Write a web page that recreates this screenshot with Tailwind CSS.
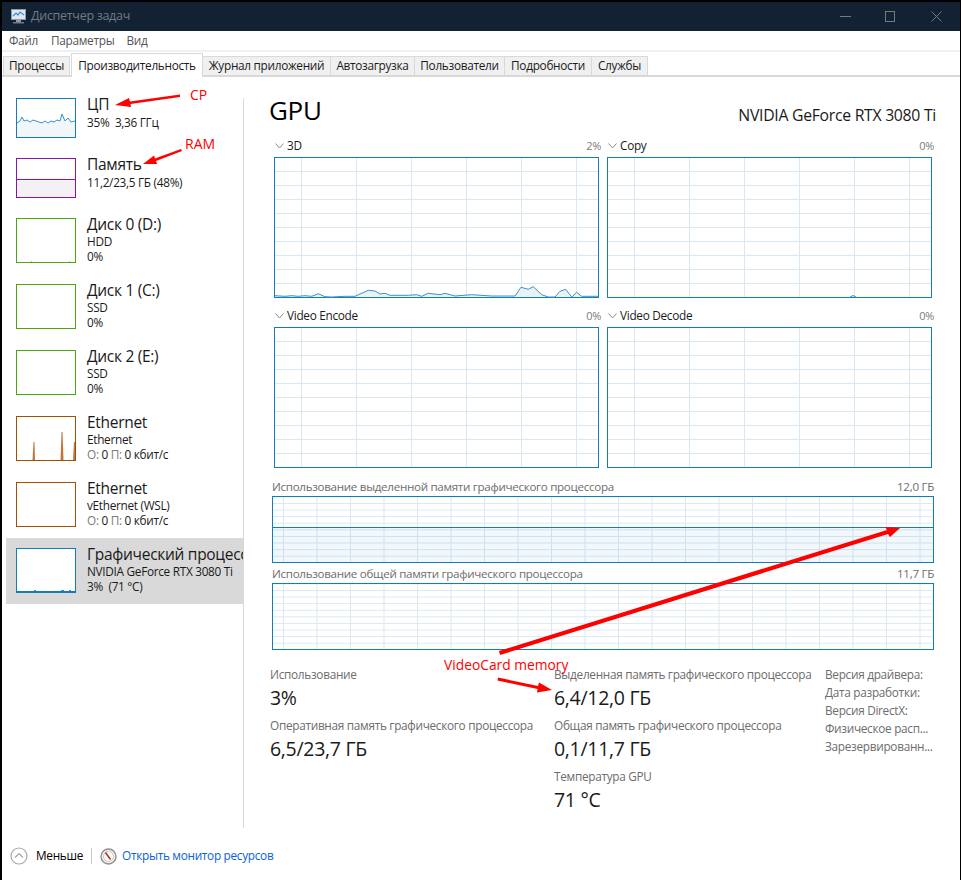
<!DOCTYPE html>
<html lang="ru">
<head>
<meta charset="utf-8">
<title>Диспетчер задач</title>
<script src="https://cdn.jsdelivr.net/npm/@tailwindcss/browser@4"></script>
</head>
<body class="bg-black">
<div class="relative w-[961px] h-[880px] bg-black pl-[2px] pr-px pt-[2px] font-['Open_Sans',sans-serif] text-[11.8px] text-[#1a1a1a] overflow-hidden tracking-[-0.025em] flex flex-col">

  <!-- title bar -->
  <div class="h-[29px] bg-[#122233] flex items-center text-[#6f7b85] shrink-0">
    <svg class="ml-[8px] w-[17px] h-[15px]" viewBox="0 0 17 15"><rect x="1.5" y="0.5" width="14" height="10" fill="#dfe7ee" stroke="#8e9aa5"/><polyline points="3,7 6,4 8,6 10,3 14,6" fill="none" stroke="#3d8ad0" stroke-width="1.2"/><rect x="6" y="11" width="5" height="2" fill="#8e9aa5"/><rect x="3" y="13" width="11" height="1.5" fill="#6f7b85"/></svg>
    <span class="ml-[4px] text-[12.5px]">Диспетчер задач</span>
    <div class="ml-auto flex items-center">
      <svg class="w-[11px] h-[11px]" viewBox="0 0 11 11"><line x1="0" y1="5.5" x2="11" y2="5.5" stroke="#6f7b85"/></svg>
      <svg class="ml-[34px] w-[10px] h-[11px]" viewBox="0 0 10 11"><rect x="0.5" y="0.5" width="9" height="10" fill="none" stroke="#6f7b85"/></svg>
      <svg class="ml-[36px] mr-[18px] w-[11px] h-[11px]" viewBox="0 0 11 11"><path d="M0.5 0.5L10.5 10.5M10.5 0.5L0.5 10.5" stroke="#6f7b85"/></svg>
    </div>
  </div>

  <div class="flex-1 bg-white flex flex-col min-h-0">
    <!-- menu -->
    <div class="h-[18px] flex items-center text-[#555] shrink-0 border-b-[2px] border-[#f0f0f0] box-content pt-px -mb-px">
      <span class="ml-[7px]">Файл</span><span class="ml-[13px]">Параметры</span><span class="ml-[12px]">Вид</span>
    </div>
    <!-- tabs -->
    <div class="h-[23px] mt-[1px] flex items-end border-b-[2px] border-[#d9d9d9] box-content pl-[1px] shrink-0 relative">
      <div class="w-[67px] h-[20px] mb-[-1px] bg-[#f0f0f0] border border-[#d9d9d9] flex items-center justify-center">Процессы</div>
      <div class="w-[132px] h-[24px] mb-[-2px] bg-white border border-b-0 border-[#d9d9d9] flex items-center justify-center relative z-10 ml-[1px]">Производительность</div>
      <div class="w-[129px] h-[20px] mb-[-1px] bg-[#f0f0f0] border border-[#d9d9d9] -ml-[1px] flex items-center justify-center">Журнал приложений</div>
      <div class="w-[85px] h-[20px] mb-[-1px] bg-[#f0f0f0] border border-[#d9d9d9] -ml-[1px] flex items-center justify-center">Автозагрузка</div>
      <div class="w-[91px] h-[20px] mb-[-1px] bg-[#f0f0f0] border border-[#d9d9d9] -ml-[1px] flex items-center justify-center">Пользователи</div>
      <div class="w-[88px] h-[20px] mb-[-1px] bg-[#f0f0f0] border border-[#d9d9d9] -ml-[1px] flex items-center justify-center">Подробности</div>
      <div class="w-[57px] h-[20px] mb-[-1px] bg-[#f0f0f0] border border-[#d9d9d9] -ml-[1px] flex items-center justify-center">Службы</div>
    </div>

    <!-- body -->
    <div class="flex mt-[11px] h-[741px] shrink-0">
      <!-- sidebar -->
      <div class="w-[241px] shrink-0 flex flex-col pl-[4px]">
        <div class="h-[60px] flex pl-[10px] pt-[7px]">
          <div class="relative w-[60px] h-[40px] mt-[3px] border border-[#117dbb] shrink-0">
            <svg class="absolute inset-0 w-full h-full" viewBox="0 0 58 38" preserveAspectRatio="none"><path d="M0 24L3 22L5 18L7 22L10 21L13 23L16 21L19 22L22 23L25 24L28 22L31 24L34 22L37 23L40 21L43 22L45 15L48 22L51 19L54 23L58 22L58 38L0 38Z" fill="#f1f6fa"/><polyline points="0,24 3,22 5,18 7,22 10,21 13,23 16,21 19,22 22,23 25,24 28,22 31,24 34,22 37,23 40,21 43,22 45,15 48,22 51,19 54,23 58,22" fill="none" stroke="#3a92c8" stroke-width="1"/></svg>
          </div>
          <div class="ml-[11px] leading-[16px]"><div class="text-[15.5px] leading-[19px] h-[19px]">ЦП</div><div>35%&nbsp; 3,36 ГГц</div></div>
        </div>
        <div class="h-[60px] flex pl-[10px] pt-[7px]">
          <div class="w-[60px] h-[40px] mt-[3px] border border-[#8b12ae] shrink-0 flex flex-col"><div class="h-[21px] border-b border-[#8b12ae]"></div><div class="flex-1 bg-[#f3f1f4]"></div></div>
          <div class="ml-[11px] leading-[16px]"><div class="text-[15.5px] leading-[19px] h-[19px]">Память</div><div>11,2/23,5 ГБ (48%)</div></div>
        </div>
        <div class="h-[66px] flex pl-[10px] pt-[7px]">
          <div class="relative w-[60px] h-[45px] mt-[3px] border border-[#4da60c] shrink-0"><div class="absolute bottom-0 left-[14px] w-px h-px bg-[#9ccf7a]"></div><div class="absolute bottom-0 left-[52px] w-px h-px bg-[#9ccf7a]"></div></div>
          <div class="ml-[11px] leading-[15px]"><div class="text-[15.5px] leading-[19px] h-[19px]">Диск 0 (D:)</div><div>HDD</div><div>0%</div></div>
        </div>
        <div class="h-[66px] flex pl-[10px] pt-[7px]">
          <div class="w-[60px] h-[45px] mt-[3px] border border-[#4da60c] shrink-0"></div>
          <div class="ml-[11px] leading-[15px]"><div class="text-[15.5px] leading-[19px] h-[19px]">Диск 1 (C:)</div><div>SSD</div><div>0%</div></div>
        </div>
        <div class="h-[66px] flex pl-[10px] pt-[7px]">
          <div class="w-[60px] h-[45px] mt-[3px] border border-[#4da60c] shrink-0"></div>
          <div class="ml-[11px] leading-[15px]"><div class="text-[15.5px] leading-[19px] h-[19px]">Диск 2 (E:)</div><div>SSD</div><div>0%</div></div>
        </div>
        <div class="h-[66px] flex pl-[10px] pt-[7px]">
          <div class="relative w-[60px] h-[45px] mt-[3px] border border-[#a74f01] shrink-0">
            <svg class="absolute inset-0 w-full h-full" viewBox="0 0 58 43"><path d="M15.5 43L16.5 25L17.5 25L18 43Z" fill="#c4763a"/><path d="M43.5 43L44.5 15L45.5 15L46.5 43Z" fill="#c4763a"/><path d="M56 43L57 25L58 25L58 43Z" fill="#c4763a"/></svg>
          </div>
          <div class="ml-[11px] leading-[15px]"><div class="text-[15.5px] leading-[19px] h-[19px]">Ethernet</div><div>Ethernet</div><div><span class="text-[#7a7a7a]">О:</span> 0 <span class="text-[#7a7a7a]">П:</span> 0 кбит/с</div></div>
        </div>
        <div class="h-[66px] flex pl-[10px] pt-[7px]">
          <div class="w-[60px] h-[45px] mt-[3px] border border-[#a74f01] shrink-0"></div>
          <div class="ml-[11px] leading-[15px]"><div class="text-[15.5px] leading-[19px] h-[19px]">Ethernet</div><div>vEthernet (WSL)</div><div><span class="text-[#7a7a7a]">О:</span> 0 <span class="text-[#7a7a7a]">П:</span> 0 кбит/с</div></div>
        </div>
        <div class="h-[66px] flex pl-[10px] pt-[7px] bg-[#d9d9d9] overflow-hidden">
          <div class="relative w-[60px] h-[45px] mt-[3px] border border-[#117dbb] bg-white shrink-0"><div class="absolute bottom-0 inset-x-0 h-[1px] bg-[#117dbb]"></div><div class="absolute bottom-[1px] left-[17px] w-[2px] h-px bg-[#3a92c8]"></div><div class="absolute bottom-[1px] left-[44px] w-[3px] h-[1px] bg-[#3a92c8]"></div><div class="absolute bottom-[1px] left-[52px] w-[2px] h-px bg-[#3a92c8]"></div></div>
          <div class="ml-[11px] leading-[15px] whitespace-nowrap"><div class="text-[15.5px] leading-[19px] h-[19px]">Графический процессор</div><div>NVIDIA GeForce RTX 3080 Ti</div><div>3%&nbsp; (71 °C)</div></div>
        </div>
      </div>

      <!-- main -->
      <div class="flex-1 border-l-[1px] border-[#d9d9d9] pl-[28px] pr-[25px] h-[730px] mt-[10px]">
        <div class="flex items-end justify-between h-[27px] -ml-[3px] mt-[2px]">
          <span class="text-[26px] leading-[34px] text-black">GPU</span>
          <span class="text-[15.8px] leading-[20px] mb-[2px] -mr-[1px]">NVIDIA GeForce RTX 3080 Ti</span>
        </div>
        <div class="w-[662px] px-[2px] pt-[8px] grid grid-cols-[325px_325px] gap-x-[8px]">
          <div>
            <div class="h-[22px] flex items-center text-[#666]"><svg class="w-[9px] h-[6px] ml-[1px]" viewBox="0 0 9 6"><path d="M0.5 0.5L4.5 5L8.5 0.5" fill="none" stroke="#8a8a8a"/></svg><span class="ml-[3px] text-[#1a1a1a]">3D</span><span class="ml-auto -mr-[2px] text-[11px] text-[#7a7a7a]">2%</span></div>
            <div class="relative h-[141px] border border-[#117dbb] bg-[linear-gradient(#d9e8f3_1px,transparent_1px),linear-gradient(90deg,#d9e8f3_1px,transparent_1px)] bg-[size:55px_14px] bg-[position:26px_13px]">
              <svg class="absolute -inset-px w-[325px] h-[141px]" viewBox="0 0 325 141"><path d="M1 138.7L11 139.3L17.7 138.7L24.3 139.3L31 138.7L37.7 139.3L44.3 136.7L51 139.7L57.7 140L71 139.3L81 139.3L94.3 133.3L101 134L106 137L111 136.3L116 138.3L134.3 138.3L142.7 137.7L147.7 139.3L154.3 136.3L166 137.7L171 136.3L181 139L197.7 137.7L217.7 139L241 139L247 130.3L254.3 132.3L259.3 129.7L267.7 137.7L274.3 140L281 140L286 134.3L291.7 132.3L297.7 140L302.7 135.3L307.7 139.3L324 139.3L324 140L1 140Z" fill="#e9f2f8"/><polyline points="1,138.7 11,139.3 17.7,138.7 24.3,139.3 31,138.7 37.7,139.3 44.3,136.7 51,139.7 57.7,140 71,139.3 81,139.3 94.3,133.3 101,134 106,137 111,136.3 116,138.3 134.3,138.3 142.7,137.7 147.7,139.3 154.3,136.3 166,137.7 171,136.3 181,139 197.7,137.7 217.7,139 241,139 247,130.3 254.3,132.3 259.3,129.7 267.7,137.7 274.3,140 281,140 286,134.3 291.7,132.3 297.7,140 302.7,135.3 307.7,139.3 324,139.3" fill="none" stroke="#3a92c8" stroke-width="1"/></svg>
            </div>
          </div>
          <div>
            <div class="h-[22px] flex items-center text-[#666]"><svg class="w-[9px] h-[6px] ml-[1px]" viewBox="0 0 9 6"><path d="M0.5 0.5L4.5 5L8.5 0.5" fill="none" stroke="#8a8a8a"/></svg><span class="ml-[3px] text-[#1a1a1a]">Copy</span><span class="ml-auto -mr-[2px] text-[11px] text-[#7a7a7a]">0%</span></div>
            <div class="relative h-[141px] border border-[#117dbb] bg-[linear-gradient(#d9e8f3_1px,transparent_1px),linear-gradient(90deg,#d9e8f3_1px,transparent_1px)] bg-[size:55px_14px] bg-[position:26px_13px]">
              <svg class="absolute -inset-px w-[325px] h-[141px]" viewBox="0 0 325 141"><polyline points="243,140 246,138.5 249,140" fill="#e9f2f8" stroke="#3a92c8"/></svg>
            </div>
          </div>
          <div class="mt-[7px]">
            <div class="h-[22px] flex items-center text-[#666]"><svg class="w-[9px] h-[6px] ml-[1px]" viewBox="0 0 9 6"><path d="M0.5 0.5L4.5 5L8.5 0.5" fill="none" stroke="#8a8a8a"/></svg><span class="ml-[3px] text-[#1a1a1a]">Video Encode</span><span class="ml-auto -mr-[2px] text-[11px] text-[#7a7a7a]">0%</span></div>
            <div class="h-[141px] border border-[#117dbb] bg-[linear-gradient(#d9e8f3_1px,transparent_1px),linear-gradient(90deg,#d9e8f3_1px,transparent_1px)] bg-[size:55px_14px] bg-[position:26px_13px]"></div>
          </div>
          <div class="mt-[7px]">
            <div class="h-[22px] flex items-center text-[#666]"><svg class="w-[9px] h-[6px] ml-[1px]" viewBox="0 0 9 6"><path d="M0.5 0.5L4.5 5L8.5 0.5" fill="none" stroke="#8a8a8a"/></svg><span class="ml-[3px] text-[#1a1a1a]">Video Decode</span><span class="ml-auto -mr-[2px] text-[11px] text-[#7a7a7a]">0%</span></div>
            <div class="h-[141px] border border-[#117dbb] bg-[linear-gradient(#d9e8f3_1px,transparent_1px),linear-gradient(90deg,#d9e8f3_1px,transparent_1px)] bg-[size:55px_14px] bg-[position:26px_13px]"></div>
          </div>
        </div>

        <div class="w-[662px] mt-[9px]">
          <div class="h-[19px] pt-[1px] flex items-center justify-between text-[11.6px] text-[#6d6d6d]"><span>Использование выделенной памяти графического процессора</span><span>12,0 ГБ</span></div>
          <div class="relative h-[67px] border border-[#117dbb] bg-[linear-gradient(#d9e8f3_1px,transparent_1px),linear-gradient(90deg,#d9e8f3_1px,transparent_1px)] bg-[size:33.5px_6.6px] bg-[position:10px_6px]">
            <div class="absolute inset-x-0 bottom-0 h-[35px] border-t border-[#117dbb] bg-[#117dbb]/6"></div>
          </div>
          <div class="h-[20px] pt-[2px] flex items-center justify-between text-[11.6px] text-[#6d6d6d]"><span>Использование общей памяти графического процессора</span><span>11,7 ГБ</span></div>
          <div class="h-[67px] border border-[#117dbb] bg-[linear-gradient(#d9e8f3_1px,transparent_1px),linear-gradient(90deg,#d9e8f3_1px,transparent_1px)] bg-[size:33.5px_6.6px] bg-[position:10px_6px]"></div>
        </div>

        <div class="-ml-[2px] mt-[16px] grid grid-cols-[284px_271px_1fr] whitespace-nowrap">
          <div class="text-[#6d6d6d]">
            <div class="leading-[16px] mb-[2px]">Использование</div>
            <div class="text-[19.5px] leading-[28px] text-[#1a1a1a] mb-[5px]">3%</div>
            <div class="leading-[16px] mb-[2px]">Оперативная память графического процессора</div>
            <div class="text-[19.5px] leading-[28px] text-[#1a1a1a]">6,5/23,7 ГБ</div>
          </div>
          <div class="text-[#6d6d6d]">
            <div class="leading-[16px] mb-[2px]">Выделенная память графического процессора</div>
            <div class="text-[19.5px] leading-[28px] text-[#1a1a1a] mb-[5px]">6,4/12,0 ГБ</div>
            <div class="leading-[16px] mb-[2px]">Общая память графического процессора</div>
            <div class="text-[19.5px] leading-[28px] text-[#1a1a1a] mb-[5px]">0,1/11,7 ГБ</div>
            <div class="leading-[16px] mb-[2px]">Температура GPU</div>
            <div class="text-[19.5px] leading-[28px] text-[#1a1a1a]">71 °C</div>
          </div>
          <div class="text-[#6d6d6d] leading-[18px] -mt-px">
            <div>Версия драйвера:</div>
            <div>Дата разработки:</div>
            <div>Версия DirectX:</div>
            <div>Физическое расп...</div>
            <div>Зарезервированн...</div>
          </div>
        </div>
      </div>
    </div>

    <!-- footer -->
    <div class="flex items-center h-[20px] mt-[17px] shrink-0">
      <svg class="ml-[8px] w-[18px] h-[18px]" viewBox="0 0 18 18"><circle cx="9" cy="9" r="8" fill="#fff" stroke="#a8a8a8" stroke-width="1.2"/><path d="M5 10.5L9 6.5L13 10.5" fill="none" stroke="#a8a8a8" stroke-width="1.2"/></svg>
      <span class="ml-[8px] text-black">Меньше</span>
      <div class="ml-[8px] w-px h-[16px] bg-[#c8c8c8]"></div>
      <svg class="ml-[8px] w-[17px] h-[17px]" viewBox="0 0 17 17"><circle cx="8.5" cy="8.5" r="7.5" fill="#f3f1ee" stroke="#8f8f8f" stroke-width="1.4"/><circle cx="8.5" cy="8.5" r="5" fill="#fff" stroke="#c9c4bd"/><path d="M5.5 4.5L10.5 11.5" stroke="#c4261d" stroke-width="1.5"/></svg>
      <span class="ml-[5px] text-[#0a62d8]">Открыть монитор ресурсов</span>
    </div>
  </div>

  <!-- red annotations drawn over the screenshot -->
  <svg class="absolute left-0 top-0 w-[961px] h-[880px] pointer-events-none" viewBox="0 0 961 880">
    <g fill="#ff0000">
      <path d="M180 94.5L130 101.5L129 98L115 105L131 107L130.5 104L180 97Z"/>
      <path d="M181 149L155 158.5L154 155.5L143 164L157 164L156 161L182 151Z"/>
      <path d="M500 655L888 534L890 537L900 528L885 527L887 530L499 651Z"/>
      <path d="M498 677.5L538 686L539 682.5L552 690L537 692.5L537.5 689L497.5 680.5Z"/>
    </g>
  </svg>
  <span class="absolute left-[190px] top-[86px] text-[14px] leading-[18px] text-[#f00] tracking-normal">CP</span>
  <span class="absolute left-[185px] top-[135px] text-[14px] leading-[18px] text-[#f00] tracking-normal">RAM</span>
  <span class="absolute left-[444px] top-[656px] text-[13.8px] leading-[18px] text-[#f00] tracking-normal">VideoCard memory</span>
</div>
</body>
</html>
